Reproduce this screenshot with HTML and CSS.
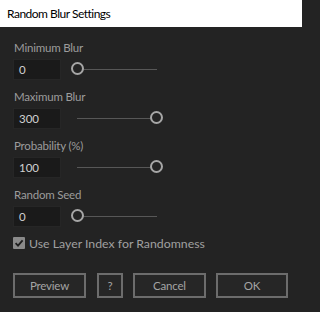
FILE: index.html
```html
<!DOCTYPE html>
<html>
<head>
<meta charset="utf-8">
<link rel="stylesheet" href="styles.css">
</head>
<body>
<div class="window">
  <div class="titlebar">Random Blur Settings</div>
  <div class="panel">
    <div class="group">
      <div class="label">Minimum Blur</div>
      <div class="row">
        <div class="input">0</div>
        <div class="slider"><div class="track"></div><div class="thumb" style="left:0px"></div></div>
      </div>
    </div>
    <div class="group">
      <div class="label">Maximum Blur</div>
      <div class="row">
        <div class="input">300</div>
        <div class="slider"><div class="track"></div><div class="thumb" style="left:79px"></div></div>
      </div>
    </div>
    <div class="group">
      <div class="label">Probability (%)</div>
      <div class="row">
        <div class="input">100</div>
        <div class="slider"><div class="track"></div><div class="thumb" style="left:79px"></div></div>
      </div>
    </div>
    <div class="group">
      <div class="label">Random Seed</div>
      <div class="row">
        <div class="input">0</div>
        <div class="slider"><div class="track"></div><div class="thumb" style="left:0px"></div></div>
      </div>
    </div>
    <label class="check">
      <span class="box"><svg width="12" height="12" viewBox="0 0 12 12"><path d="M2.6 6.2 L5 8.6 L9.6 3.4" fill="none" stroke="#1e1e1e" stroke-width="1.8"/></svg></span>
      <span class="check-text">Use Layer Index for Randomness</span>
    </label>
    <div class="buttons">
      <div class="btn btn-wide">Preview</div>
      <div class="btn btn-help">?</div>
      <div class="btn btn-wide">Cancel</div>
      <div class="btn btn-ok">OK</div>
    </div>
  </div>
</div>
</body>
</html>
```
FILE: styles.css
```css
html, body {
  margin: 0;
  padding: 0;
  background: #232323;
}
.window {
  width: 302px;
  height: 312px;
  display: flex;
  flex-direction: column;
  font-family: Lato, "Noto Sans", sans-serif;
}
.titlebar {
  height: 27px;
  background: #ffffff;
  color: #000000;
  font-size: 12px;
  letter-spacing: -0.5px;
  line-height: 27px;
  padding-left: 7px;
  box-sizing: border-box;
}
.panel {
  flex: 1;
  background: #232323;
  padding: 13px 0 0 13px;
  display: flex;
  flex-direction: column;
}
.group {
  display: flex;
  flex-direction: column;
  margin-bottom: 9px;
}
.group:nth-of-type(4) {
  margin-bottom: 0;
}
.label {
  color: #9c9c9c;
  font-size: 11.5px;
  letter-spacing: -0.2px;
  line-height: 16px;
  height: 16px;
  padding-left: 1px;
  margin-bottom: 3px;
}
.row {
  display: flex;
  align-items: center;
  height: 21px;
}
.input {
  width: 48px;
  height: 21px;
  box-sizing: border-box;
  background: #1a1a1a;
  border: 1px solid #262626;
  color: #d0d0d0;
  font-size: 11.5px;
  line-height: 19px;
  padding-left: 5px;
}
.slider {
  position: relative;
  width: 92px;
  height: 21px;
  margin-left: 10px;
}
.track {
  position: absolute;
  left: 6px;
  right: 6px;
  top: 10px;
  height: 1px;
  background: #575757;
}
.thumb {
  position: absolute;
  top: 3px;
  width: 13px;
  height: 13px;
  box-sizing: border-box;
  border: 2px solid #a6a6a6;
  border-radius: 50%;
  background: #232323;
}
.check {
  display: flex;
  align-items: center;
  height: 16px;
  margin-top: 8px;
  gap: 4px;
}
.box {
  width: 12px;
  height: 12px;
  background: #8a8a8a;
  border-radius: 1px;
  display: flex;
}
.check-text {
  color: #a0a0a0;
  font-size: 12.3px;
}
.buttons {
  display: flex;
  margin-top: 22px;
  gap: 10px;
}
.btn {
  height: 25px;
  box-sizing: border-box;
  border: 2px solid #6c6c6c;
  background: #262626;
  color: #a4a4a4;
  font-size: 11.5px;
  letter-spacing: -0.2px;
  line-height: 21px;
  text-align: center;
}
.btn-wide { width: 73px; }
.btn-help { width: 26px; margin-left: 1px; }
.btn-ok { width: 72px; }
```
